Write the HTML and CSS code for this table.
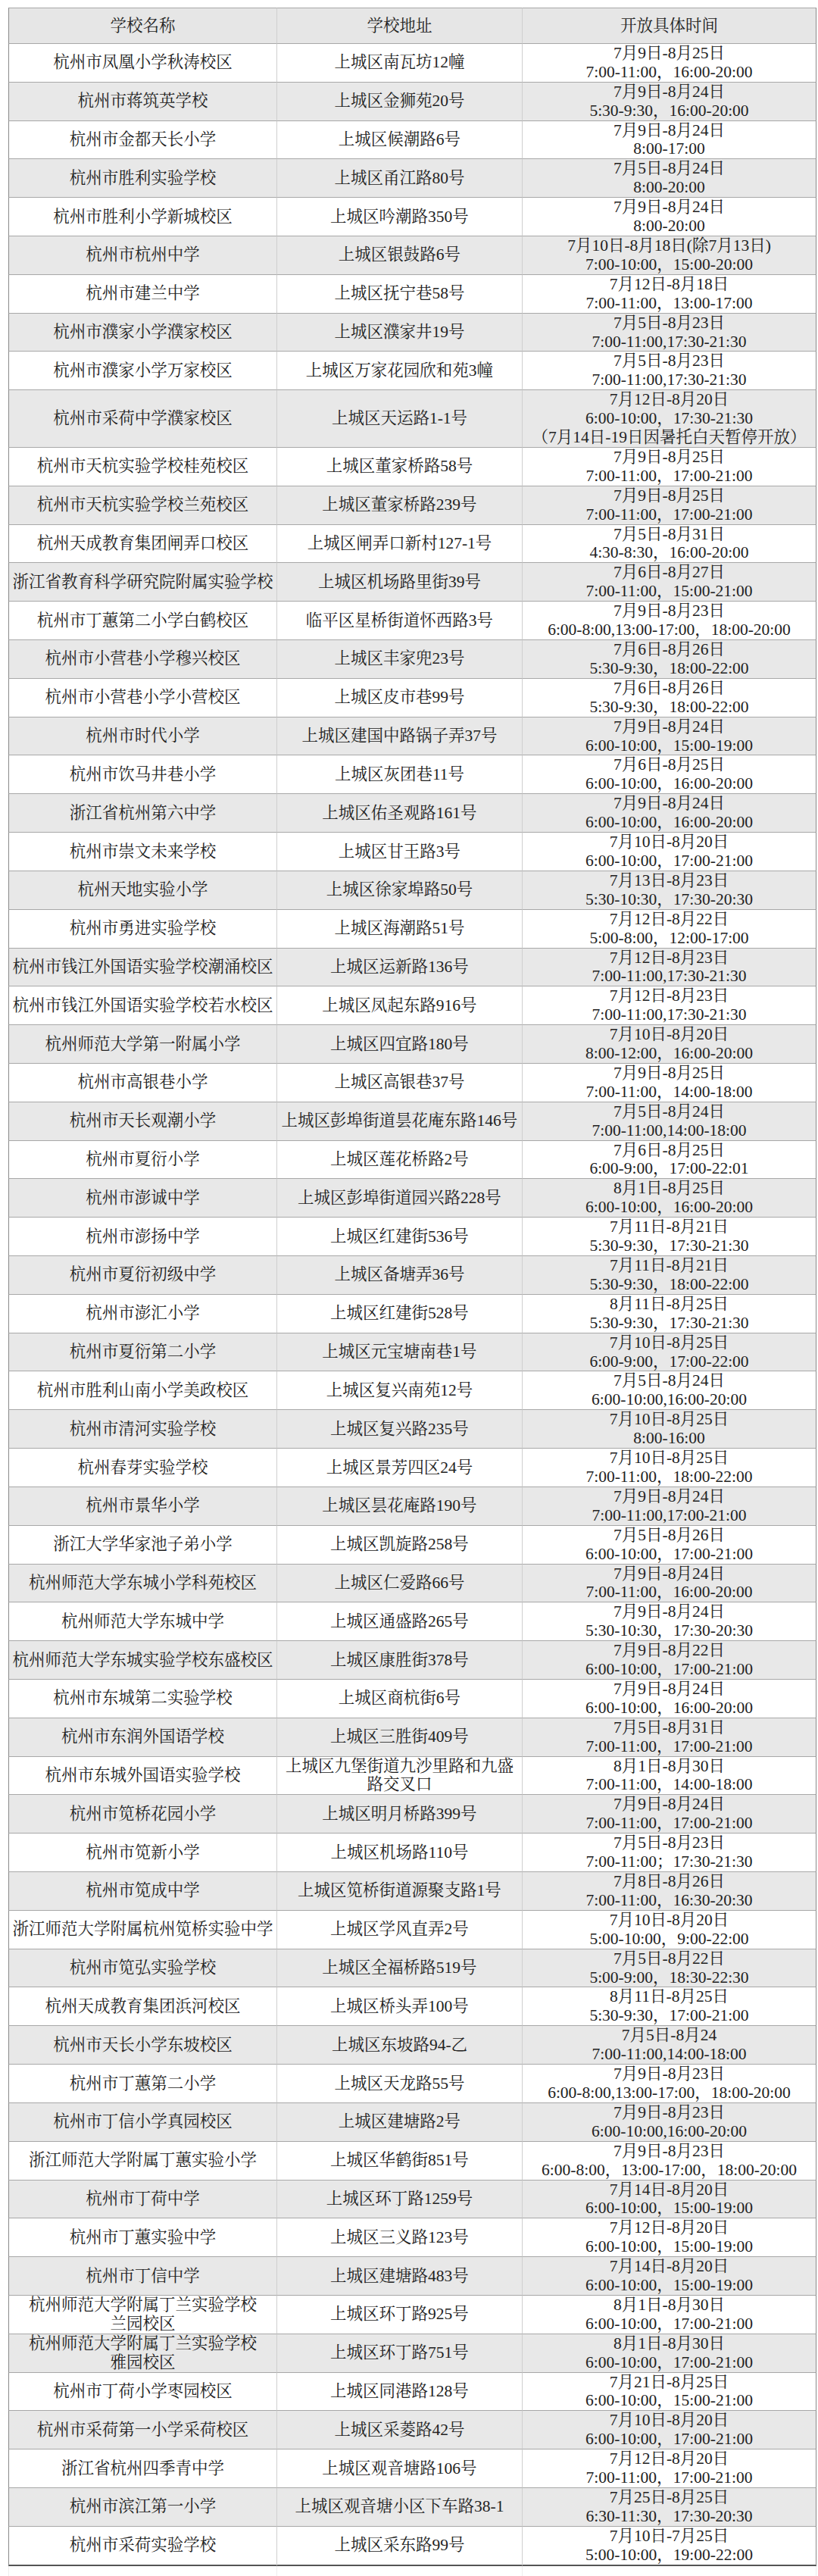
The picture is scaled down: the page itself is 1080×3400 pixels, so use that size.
FILE: index.html
```html
<!DOCTYPE html>
<html lang="zh-CN">
<head>
<meta charset="utf-8">
<title>学校开放时间</title>
<link rel="stylesheet" href="styles.css">
</head>
<body>
<div class="wrap">
<table class="sched">
<colgroup><col class="c1"><col class="c2"><col class="c3"></colgroup>
<thead>
<tr><th>学校名称</th><th>学校地址</th><th>开放具体时间</th></tr>
</thead>
<tbody>
<tr><td>杭州市凤凰小学秋涛校区</td><td>上城区南瓦坊12幢</td><td>7月9日-8月25日<br>7:00-11:00，16:00-20:00</td></tr>
<tr><td>杭州市蒋筑英学校</td><td>上城区金狮苑20号</td><td>7月9日-8月24日<br>5:30-9:30，16:00-20:00</td></tr>
<tr><td>杭州市金都天长小学</td><td>上城区候潮路6号</td><td>7月9日-8月24日<br>8:00-17:00</td></tr>
<tr><td>杭州市胜利实验学校</td><td>上城区甬江路80号</td><td>7月5日-8月24日<br>8:00-20:00</td></tr>
<tr><td>杭州市胜利小学新城校区</td><td>上城区吟潮路350号</td><td>7月9日-8月24日<br>8:00-20:00</td></tr>
<tr><td>杭州市杭州中学</td><td>上城区银鼓路6号</td><td>7月10日-8月18日(除7月13日)<br>7:00-10:00，15:00-20:00</td></tr>
<tr><td>杭州市建兰中学</td><td>上城区抚宁巷58号</td><td>7月12日-8月18日<br>7:00-11:00，13:00-17:00</td></tr>
<tr><td>杭州市濮家小学濮家校区</td><td>上城区濮家井19号</td><td>7月5日-8月23日<br>7:00-11:00,17:30-21:30</td></tr>
<tr><td>杭州市濮家小学万家校区</td><td>上城区万家花园欣和苑3幢</td><td>7月5日-8月23日<br>7:00-11:00,17:30-21:30</td></tr>
<tr><td>杭州市采荷中学濮家校区</td><td>上城区天运路1-1号</td><td>7月12日-8月20日<br>6:00-10:00，17:30-21:30<br>（7月14日-19日因暑托白天暂停开放）</td></tr>
<tr><td>杭州市天杭实验学校桂苑校区</td><td>上城区董家桥路58号</td><td>7月9日-8月25日<br>7:00-11:00，17:00-21:00</td></tr>
<tr><td>杭州市天杭实验学校兰苑校区</td><td>上城区董家桥路239号</td><td>7月9日-8月25日<br>7:00-11:00，17:00-21:00</td></tr>
<tr><td>杭州天成教育集团闸弄口校区</td><td>上城区闸弄口新村127-1号</td><td>7月5日-8月31日<br>4:30-8:30，16:00-20:00</td></tr>
<tr><td>浙江省教育科学研究院附属实验学校</td><td>上城区机场路里街39号</td><td>7月6日-8月27日<br>7:00-11:00，15:00-21:00</td></tr>
<tr><td>杭州市丁蕙第二小学白鹤校区</td><td>临平区星桥街道怀西路3号</td><td>7月9日-8月23日<br>6:00-8:00,13:00-17:00，18:00-20:00</td></tr>
<tr><td>杭州市小营巷小学穆兴校区</td><td>上城区丰家兜23号</td><td>7月6日-8月26日<br>5:30-9:30，18:00-22:00</td></tr>
<tr><td>杭州市小营巷小学小营校区</td><td>上城区皮市巷99号</td><td>7月6日-8月26日<br>5:30-9:30，18:00-22:00</td></tr>
<tr><td>杭州市时代小学</td><td>上城区建国中路锅子弄37号</td><td>7月9日-8月24日<br>6:00-10:00，15:00-19:00</td></tr>
<tr><td>杭州市饮马井巷小学</td><td>上城区灰团巷11号</td><td>7月6日-8月25日<br>6:00-10:00，16:00-20:00</td></tr>
<tr><td>浙江省杭州第六中学</td><td>上城区佑圣观路161号</td><td>7月9日-8月24日<br>6:00-10:00，16:00-20:00</td></tr>
<tr><td>杭州市崇文未来学校</td><td>上城区甘王路3号</td><td>7月10日-8月20日<br>6:00-10:00，17:00-21:00</td></tr>
<tr><td>杭州天地实验小学</td><td>上城区徐家埠路50号</td><td>7月13日-8月23日<br>5:30-10:30，17:30-20:30</td></tr>
<tr><td>杭州市勇进实验学校</td><td>上城区海潮路51号</td><td>7月12日-8月22日<br>5:00-8:00，12:00-17:00</td></tr>
<tr><td>杭州市钱江外国语实验学校潮涌校区</td><td>上城区运新路136号</td><td>7月12日-8月23日<br>7:00-11:00,17:30-21:30</td></tr>
<tr><td>杭州市钱江外国语实验学校若水校区</td><td>上城区凤起东路916号</td><td>7月12日-8月23日<br>7:00-11:00,17:30-21:30</td></tr>
<tr><td>杭州师范大学第一附属小学</td><td>上城区四宜路180号</td><td>7月10日-8月20日<br>8:00-12:00，16:00-20:00</td></tr>
<tr><td>杭州市高银巷小学</td><td>上城区高银巷37号</td><td>7月9日-8月25日<br>7:00-11:00，14:00-18:00</td></tr>
<tr><td>杭州市天长观潮小学</td><td>上城区彭埠街道昙花庵东路146号</td><td>7月5日-8月24日<br>7:00-11:00,14:00-18:00</td></tr>
<tr><td>杭州市夏衍小学</td><td>上城区莲花桥路2号</td><td>7月6日-8月25日<br>6:00-9:00，17:00-22:01</td></tr>
<tr><td>杭州市澎诚中学</td><td>上城区彭埠街道园兴路228号</td><td>8月1日-8月25日<br>6:00-10:00，16:00-20:00</td></tr>
<tr><td>杭州市澎扬中学</td><td>上城区红建街536号</td><td>7月11日-8月21日<br>5:30-9:30，17:30-21:30</td></tr>
<tr><td>杭州市夏衍初级中学</td><td>上城区备塘弄36号</td><td>7月11日-8月21日<br>5:30-9:30，18:00-22:00</td></tr>
<tr><td>杭州市澎汇小学</td><td>上城区红建街528号</td><td>8月11日-8月25日<br>5:30-9:30，17:30-21:30</td></tr>
<tr><td>杭州市夏衍第二小学</td><td>上城区元宝塘南巷1号</td><td>7月10日-8月25日<br>6:00-9:00，17:00-22:00</td></tr>
<tr><td>杭州市胜利山南小学美政校区</td><td>上城区复兴南苑12号</td><td>7月5日-8月24日<br>6:00-10:00,16:00-20:00</td></tr>
<tr><td>杭州市清河实验学校</td><td>上城区复兴路235号</td><td>7月10日-8月25日<br>8:00-16:00</td></tr>
<tr><td>杭州春芽实验学校</td><td>上城区景芳四区24号</td><td>7月10日-8月25日<br>7:00-11:00，18:00-22:00</td></tr>
<tr><td>杭州市景华小学</td><td>上城区昙花庵路190号</td><td>7月9日-8月24日<br>7:00-11:00,17:00-21:00</td></tr>
<tr><td>浙江大学华家池子弟小学</td><td>上城区凯旋路258号</td><td>7月5日-8月26日<br>6:00-10:00，17:00-21:00</td></tr>
<tr><td>杭州师范大学东城小学科苑校区</td><td>上城区仁爱路66号</td><td>7月9日-8月24日<br>7:00-11:00，16:00-20:00</td></tr>
<tr><td>杭州师范大学东城中学</td><td>上城区通盛路265号</td><td>7月9日-8月24日<br>5:30-10:30，17:30-20:30</td></tr>
<tr><td>杭州师范大学东城实验学校东盛校区</td><td>上城区康胜街378号</td><td>7月9日-8月22日<br>6:00-10:00，17:00-21:00</td></tr>
<tr><td>杭州市东城第二实验学校</td><td>上城区商杭街6号</td><td>7月9日-8月24日<br>6:00-10:00，16:00-20:00</td></tr>
<tr><td>杭州市东润外国语学校</td><td>上城区三胜街409号</td><td>7月5日-8月31日<br>7:00-11:00，17:00-21:00</td></tr>
<tr><td>杭州市东城外国语实验学校</td><td>上城区九堡街道九沙里路和九盛<br>路交叉口</td><td>8月1日-8月30日<br>7:00-11:00，14:00-18:00</td></tr>
<tr><td>杭州市笕桥花园小学</td><td>上城区明月桥路399号</td><td>7月9日-8月24日<br>7:00-11:00，17:00-21:00</td></tr>
<tr><td>杭州市笕新小学</td><td>上城区机场路110号</td><td>7月5日-8月23日<br>7:00-11:00；17:30-21:30</td></tr>
<tr><td>杭州市笕成中学</td><td>上城区笕桥街道源聚支路1号</td><td>7月8日-8月26日<br>7:00-11:00，16:30-20:30</td></tr>
<tr><td>浙江师范大学附属杭州笕桥实验中学</td><td>上城区学风直弄2号</td><td>7月10日-8月20日<br>5:00-10:00，9:00-22:00</td></tr>
<tr><td>杭州市笕弘实验学校</td><td>上城区全福桥路519号</td><td>7月5日-8月22日<br>5:00-9:00，18:30-22:30</td></tr>
<tr><td>杭州天成教育集团浜河校区</td><td>上城区桥头弄100号</td><td>8月11日-8月25日<br>5:30-9:30，17:00-21:00</td></tr>
<tr><td>杭州市天长小学东坡校区</td><td>上城区东坡路94-乙</td><td>7月5日-8月24<br>7:00-11:00,14:00-18:00</td></tr>
<tr><td>杭州市丁蕙第二小学</td><td>上城区天龙路55号</td><td>7月9日-8月23日<br>6:00-8:00,13:00-17:00，18:00-20:00</td></tr>
<tr><td>杭州市丁信小学真园校区</td><td>上城区建塘路2号</td><td>7月9日-8月23日<br>6:00-10:00,16:00-20:00</td></tr>
<tr><td>浙江师范大学附属丁蕙实验小学</td><td>上城区华鹤街851号</td><td>7月9日-8月23日<br>6:00-8:00，13:00-17:00，18:00-20:00</td></tr>
<tr><td>杭州市丁荷中学</td><td>上城区环丁路1259号</td><td>7月14日-8月20日<br>6:00-10:00，15:00-19:00</td></tr>
<tr><td>杭州市丁蕙实验中学</td><td>上城区三义路123号</td><td>7月12日-8月20日<br>6:00-10:00，15:00-19:00</td></tr>
<tr><td>杭州市丁信中学</td><td>上城区建塘路483号</td><td>7月14日-8月20日<br>6:00-10:00，15:00-19:00</td></tr>
<tr><td>杭州师范大学附属丁兰实验学校<br>兰园校区</td><td>上城区环丁路925号</td><td>8月1日-8月30日<br>6:00-10:00，17:00-21:00</td></tr>
<tr><td>杭州师范大学附属丁兰实验学校<br>雅园校区</td><td>上城区环丁路751号</td><td>8月1日-8月30日<br>6:00-10:00，17:00-21:00</td></tr>
<tr><td>杭州市丁荷小学枣园校区</td><td>上城区同港路128号</td><td>7月21日-8月25日<br>6:00-10:00，15:00-21:00</td></tr>
<tr><td>杭州市采荷第一小学采荷校区</td><td>上城区采菱路42号</td><td>7月10日-8月20日<br>6:00-10:00，17:00-21:00</td></tr>
<tr><td>浙江省杭州四季青中学</td><td>上城区观音塘路106号</td><td>7月12日-8月20日<br>7:00-11:00，17:00-21:00</td></tr>
<tr><td>杭州市滨江第一小学</td><td>上城区观音塘小区下车路38-1</td><td>7月25日-8月25日<br>6:30-11:30，17:30-20:30</td></tr>
<tr><td>杭州市采荷实验学校</td><td>上城区采东路99号</td><td>7月10日-7月25日<br>5:00-10:00，19:00-22:00</td></tr>
</tbody>
</table>
<div class="tail"><div></div><div></div><div></div></div>
</div>
</body>
</html>
```

FILE: styles.css
```css
html, body {
  margin: 0;
  padding: 0;
  background: #ffffff;
}

body {
  font-family: "Liberation Serif", "Noto Serif CJK SC", "Noto Sans CJK SC", serif;
  color: #222222;
}

.wrap {
  padding: 10px 2px 0 11px;
}

.sched {
  width: 1067px;
  table-layout: fixed;
  border-collapse: separate;
  border-spacing: 0;
  font-size: 21.5px;
}

.c1 { width: 355px; }
.c2 { width: 324px; }
.c3 { width: 388px; }

.sched th,
.sched td {
  text-align: center;
  vertical-align: middle;
  white-space: nowrap;
  line-height: 24.9px;
  padding: 0 4px;
  border-right: 1px solid #cfcfcf;
  border-bottom: 1px solid #a8a8a8;
  overflow: hidden;
}

.sched th:first-child,
.sched td:first-child {
  border-left: 1px solid #8a8a8a;
}

.sched th:last-child,
.sched td:last-child {
  border-right: 1px solid #8a8a8a;
}

.sched th {
  font-weight: normal;
  background: #e6e6e6;
  padding-top: 10.5px;
  padding-bottom: 10.5px;
  border-top: 1px solid #a8a8a8;
}

.sched tbody tr:nth-child(even) td {
  background: #e8e8e8;
}

.sched tbody tr:last-child td {
  border-bottom: 2px solid #555555;
}

.tail {
  display: grid;
  grid-template-columns: 355px 324px 388px;
  width: 1067px;
  height: 40px;
}

.tail div {
  border-right: 1px solid #eeeeee;
}

.tail div:first-child {
  border-left: 1px solid #eeeeee;
}
```
